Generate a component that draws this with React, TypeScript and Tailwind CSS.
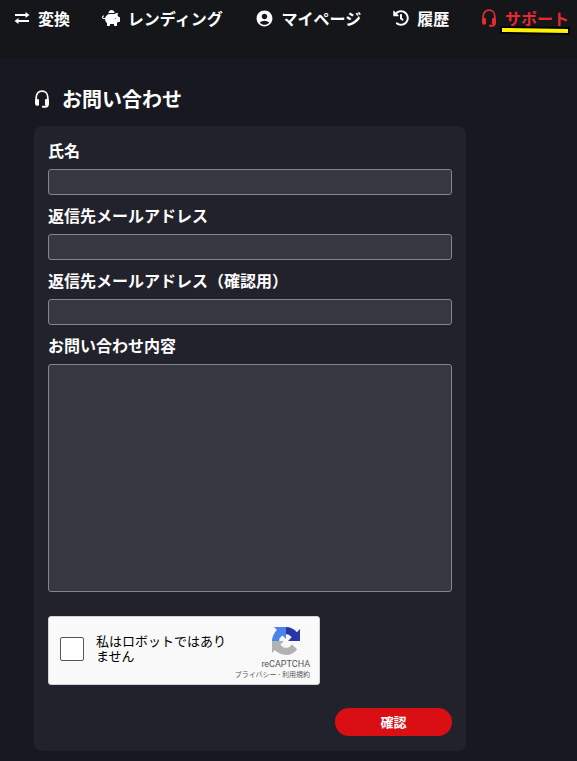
import React from "react";
import { FaHistory, FaPiggyBank } from "react-icons/fa";
import { MdAccountCircle } from "react-icons/md";

function HeadsetIcon() {
  return (
    <svg viewBox="0 0 16 18" className="h-[18px] w-4 shrink-0" fill="none" stroke="currentColor" aria-hidden="true">
      <path d="M2.200 11V7.200C2.200 3.600 4.600 1.100 8 1.100s5.800 2.500 5.800 6.100V11" strokeWidth="1.700" />
      <path d="M13.800 14v.6c0 1.500-.8 2.200-2.200 2.200H8.800" strokeWidth="1.900" strokeLinecap="round" />
      <path d="M1 10.200Q1 9 2.400 9h1.300q1.300 0 1.300 1v4.800q0 .9-1.300.9h-.6Q1 15.700 1 13.500zM15 10.200Q15 9 13.600 9h-1.300q-1.300 0-1.300 1v4.800q0 .9 1.300.9h.6q2.100 0 2.100-2.200z" fill="currentColor" stroke="none" />
    </svg>
  );
}

function SwapIcon() {
  return (
    <svg viewBox="0 0 16 12" className="h-3 w-4 shrink-0" fill="currentColor" aria-hidden="true">
      <path d="M1 2h10.500V0L15.500 3l-4 3V4H1zM15 8H4.500V6L.5 9l4 3v-2H15z" />
    </svg>
  );
}

function CaptchaLogo() {
  return (
    <svg viewBox="0 0 64 64" className="h-7 w-7" aria-hidden="true">
      <path fill="#2737a8" d="M64 31.955l-.033-1.370V4.687l-7.160 7.160C50.948 4.674 42.033.093 32.050.093c-10.400 0-19.622 4.960-25.458 12.640l11.736 11.860a15.550 15.550 0 0 1 4.754-5.334c2.050-1.600 4.952-2.906 8.968-2.906.485 0 .86.057 1.135.163 4.976.393 9.288 3.140 11.828 7.124l-8.307 8.307z" />
      <path fill="#4b83ea" d="M31.862.094l-1.370.033H4.594l7.160 7.160C4.580 13.147 0 22.060 0 32.046c0 10.400 4.960 19.622 12.640 25.458L24.500 45.768a15.550 15.550 0 0 1-5.334-4.754c-1.600-2.050-2.906-4.952-2.906-8.968 0-.485.057-.86.163-1.135.393-4.976 3.140-9.288 7.124-11.828l8.307 8.307z" />
      <path fill="#b2b2b2" d="M.001 32.045l.033 1.370v25.898l7.160-7.160c5.860 7.173 14.774 11.754 24.760 11.754 10.400 0 19.622-4.960 25.458-12.640l-11.736-11.860a15.550 15.550 0 0 1-4.754 5.334c-2.050 1.600-4.952 2.906-8.968 2.906-.485 0-.86-.057-1.135-.163-4.976-.393-9.288-3.140-11.828-7.124l8.307-8.307z" />
    </svg>
  );
}

const navItems = [
  { label: "変換", icon: <SwapIcon /> },
  { label: "レンディング", icon: <FaPiggyBank size={18} /> },
  { label: "マイページ", icon: <MdAccountCircle size={19} /> },
  { label: "履歴", icon: <FaHistory size={16} /> },
];

const fields = [
  { id: "name", label: "氏名", type: "text" },
  { id: "email", label: "返信先メールアドレス", type: "email" },
  { id: "email-confirm", label: "返信先メールアドレス（確認用）", type: "email" },
];

export default function App() {
  return (
    <div className="min-h-screen bg-[#181820] font-['Noto_Sans_CJK_JP',sans-serif] text-base font-bold text-white">
      <header className="h-[58px] bg-[#14161a]">
        <nav className="flex h-9 items-center justify-between pr-2 pl-3.5 whitespace-nowrap">
          {navItems.map((item) => (
            <a key={item.label} href="#" className="flex items-center gap-2">
              {item.icon}
              {item.label}
            </a>
          ))}
          <a href="#" className="flex items-center gap-2 text-[#e52b30]" aria-current="page">
            <HeadsetIcon />
            <span className="relative">
              サポート
              <svg viewBox="0 0 72 10" className="absolute top-5 -left-1.5 h-2.5 w-[72px]" aria-hidden="true">
                <path d="M1 0.500 71 1v8L1 7.500z" fill="#000" />
                <path d="M3 4 69 5" stroke="#fff200" strokeWidth="4" />
              </svg>
            </span>
          </a>
        </nav>
      </header>

      <main className="pt-[25px] pr-[111px] pb-2.5 pl-[34px]">
        <h1 className="flex h-8 items-center gap-3 text-xl">
          <HeadsetIcon />
          お問い合わせ
        </h1>
        <form className="mt-[11px] rounded-lg bg-[#22222d] px-3.5 pt-3 pb-[15px]" onSubmit={(e) => e.preventDefault()}>
          {fields.map((field) => (
            <div key={field.id} className="mb-2">
              <label htmlFor={field.id} className="block h-[31px] leading-6">
                {field.label}
              </label>
              <input
                id={field.id}
                type={field.type}
                className="block h-[26px] w-full rounded-[3px] border border-[#85858c] bg-[#37373f] px-2 text-sm"
              />
            </div>
          ))}
          <label htmlFor="message" className="block h-[31px] leading-6">
            お問い合わせ内容
          </label>
          <textarea
            id="message"
            className="block h-[228px] w-full resize-none rounded-[3px] border border-[#85858c] bg-[#37373f] p-2 text-sm"
          />

          <div className="mt-6 flex h-[69px] w-[272px] justify-between rounded-[3px] border border-[#d3d3d3] bg-[#f9f9f9] pr-[9px] pl-[11px] font-['Roboto','Noto_Sans_CJK_JP',sans-serif] font-normal text-black">
            <div className="flex items-center pb-1">
              <input
                id="robot"
                type="checkbox"
                className="h-6 w-6 shrink-0 appearance-none rounded-xs border border-[#555] bg-white"
              />
              <label htmlFor="robot" className="ml-3 w-[134px] text-[13px] leading-[15px]">
                私はロボットではありません
              </label>
            </div>
            <div className="-ml-4 flex flex-col items-end pt-2.5 whitespace-nowrap">
              <div className="flex flex-col items-center">
                <CaptchaLogo />
                <span className="text-[9px] leading-[18px] text-[#555]">reCAPTCHA</span>
              </div>
              <span className="text-[7px] leading-1 text-[#555]">
                <a href="#">プライバシー</a> - <a href="#">利用規約</a>
              </span>
            </div>
          </div>

          <button type="submit" className="mt-[23px] ml-auto block h-7 w-[117px] rounded-full bg-[#d90f14] text-[13px]">
            確認
          </button>
        </form>
      </main>
    </div>
  );
}
